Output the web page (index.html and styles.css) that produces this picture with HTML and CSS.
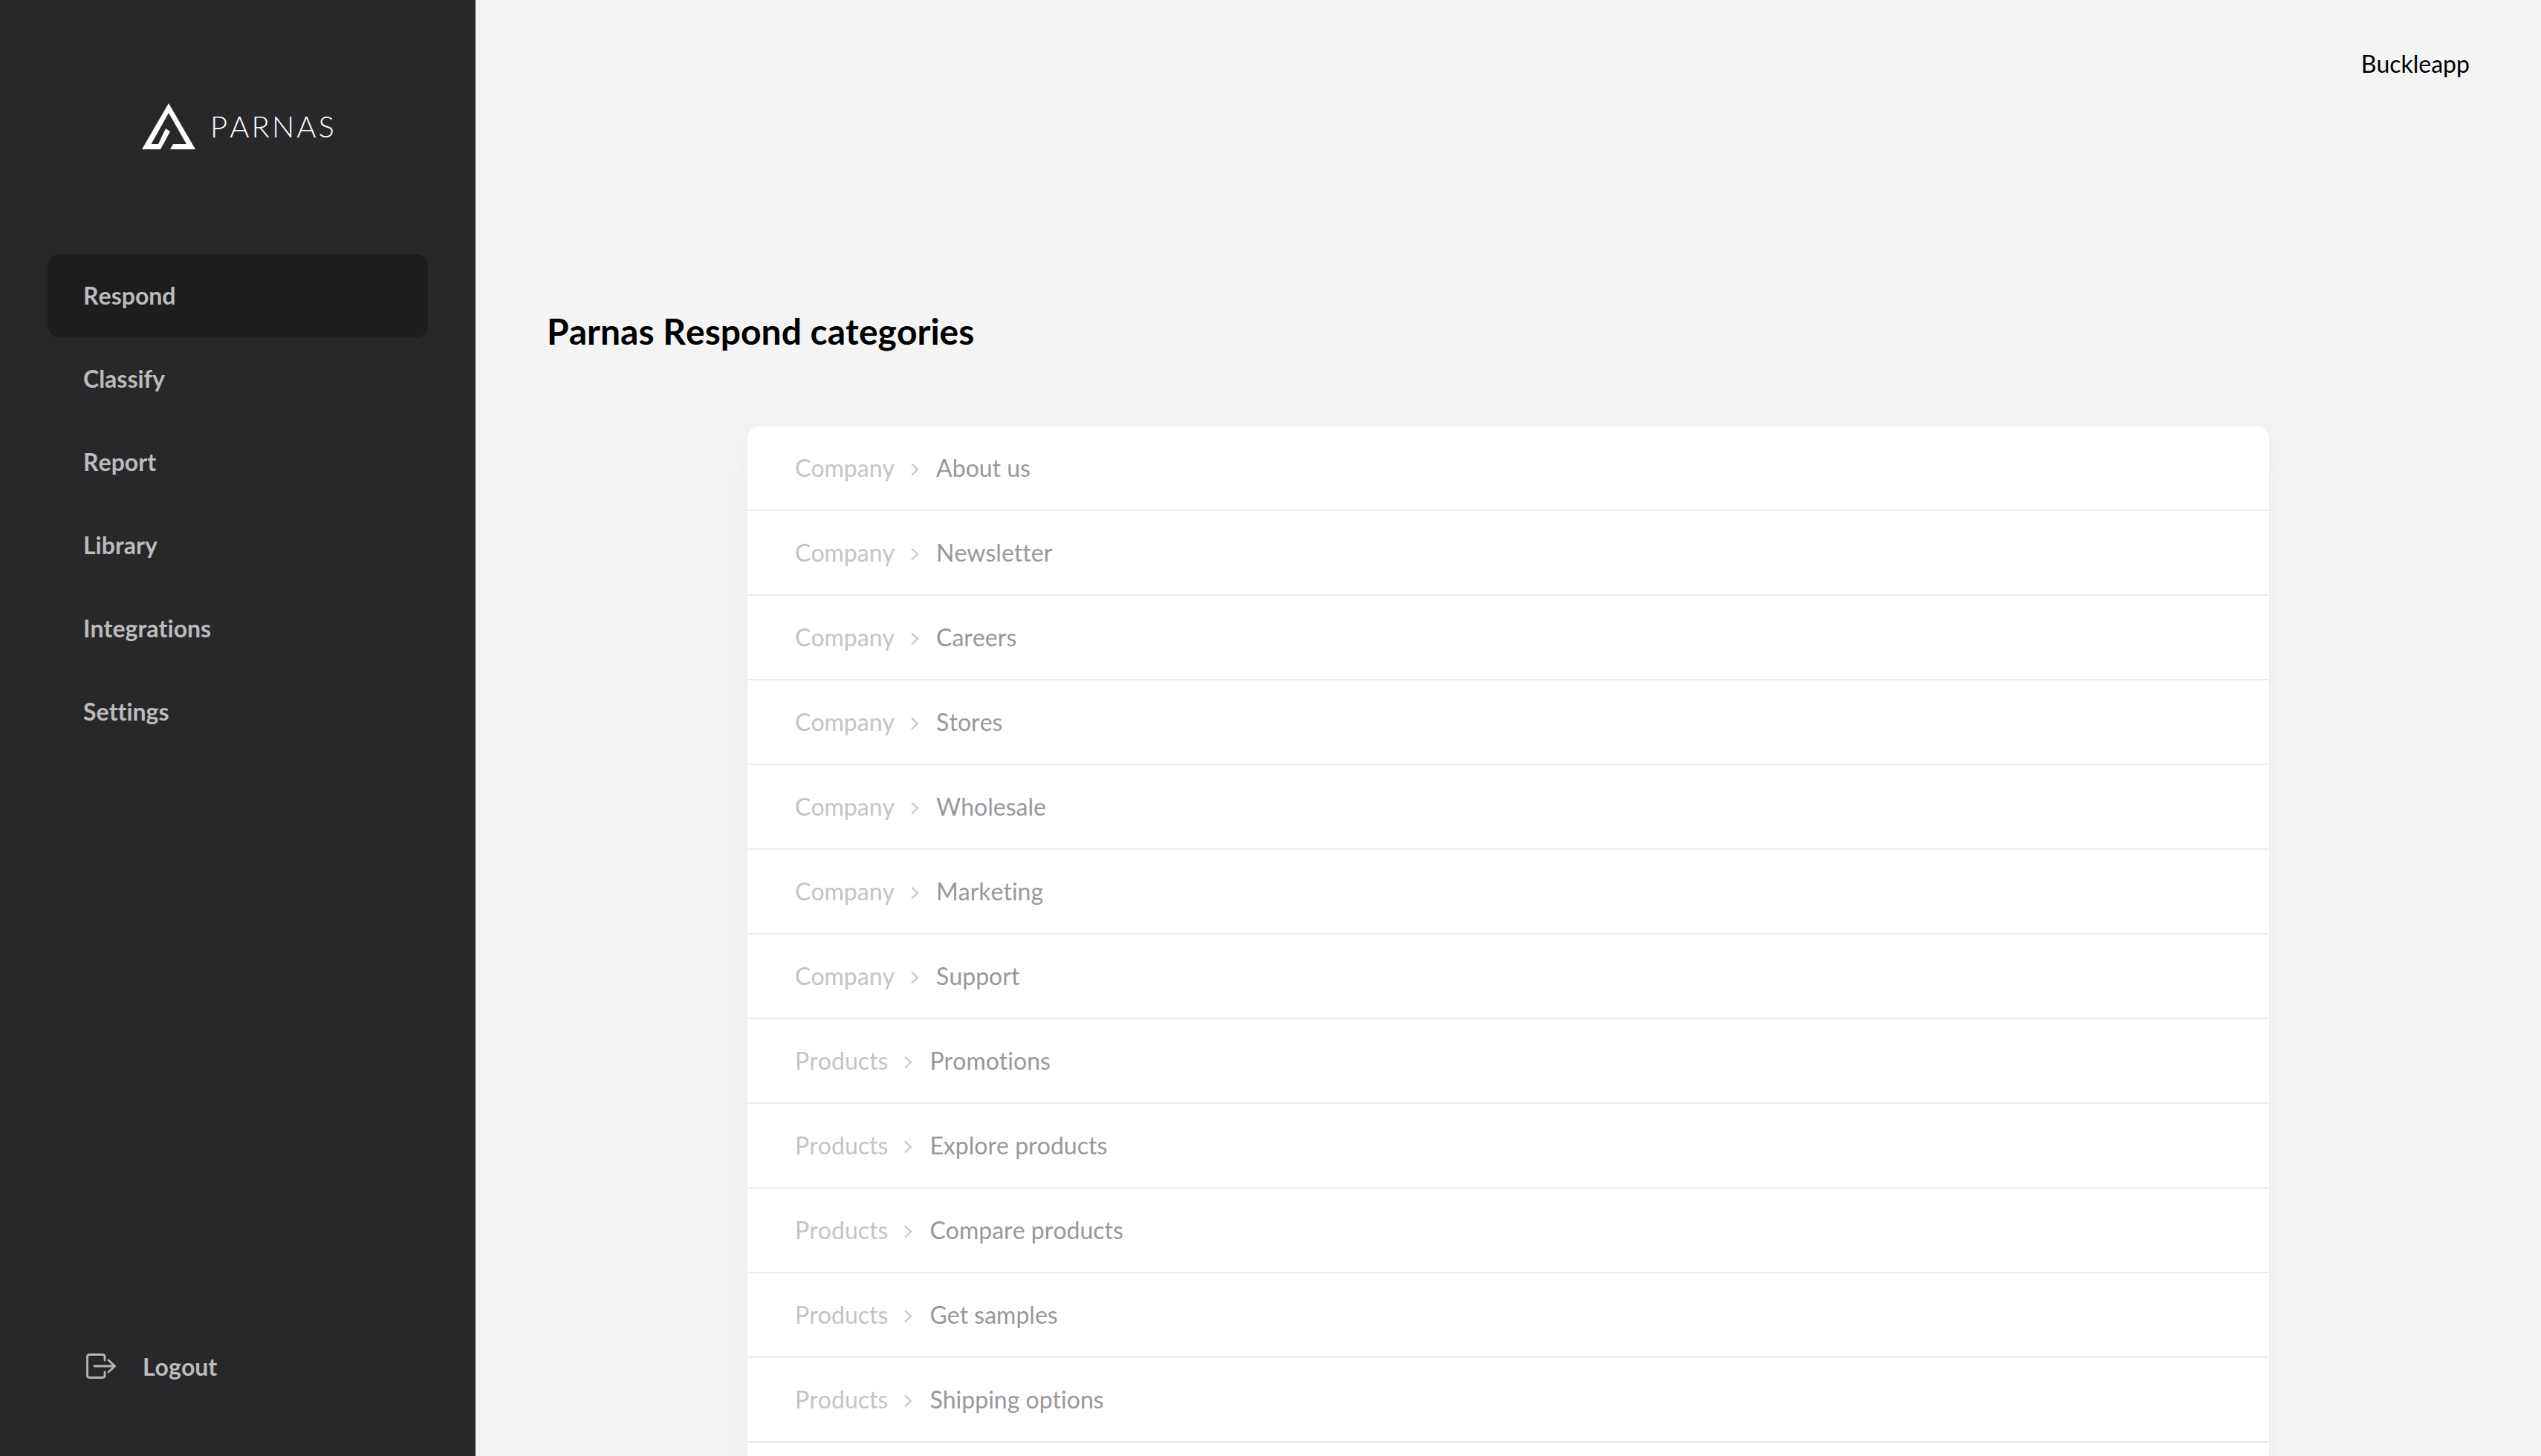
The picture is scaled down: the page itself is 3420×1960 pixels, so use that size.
FILE: index.html
```html
<html>
<head>
<title>Parnas Respond categories</title>
<link rel="stylesheet" href="styles.css">
</head>
<body>
<div id="app">

<div id="sidebar">
	<div id="logo">
		<svg class="logo-mark" width="72" height="62" viewBox="0 0 72 62">
			<path d="M36 0 L72 62 L38 62 L42 55 L60 55 L36 13 L12.5 55 L22 55 L32 34 L38 38 L25 62 L0 62 Z" fill="#ffffff"/>
		</svg>
		<span class="logo-text">PARNAS</span>
	</div>

	<div id="nav">
		<div class="nav-item active">Respond</div>
		<div class="nav-item">Classify</div>
		<div class="nav-item">Report</div>
		<div class="nav-item">Library</div>
		<div class="nav-item">Integrations</div>
		<div class="nav-item">Settings</div>
	</div>

	<div id="logout">
		<svg class="logout-icon" width="40" height="36" viewBox="0 0 40 36" fill="none" stroke="#b6b6b6" stroke-width="2.8" stroke-linecap="round" stroke-linejoin="round">
			<path d="M25 10 V5.5 Q25 2.5 22 2.5 H4.5 Q1.5 2.5 1.5 5.5 V30.5 Q1.5 33.5 4.5 33.5 H22 Q25 33.5 25 30.5 V26"/>
			<path d="M11 18 H38.5 M30 10 L38.5 18 L30 26"/>
		</svg>
		<span>Logout</span>
	</div>
</div>

<div id="main">
	<div id="topbar">Buckleapp</div>
	<h1>Parnas Respond categories</h1>

	<div id="card">
		<div class="row"><span class="parent">Company</span><svg class="sep" width="12" height="18" viewBox="0 0 12 18"><path d="M2 1.5 L10 9 L2 16.5"/></svg><span class="child">About us</span></div>
		<div class="row"><span class="parent">Company</span><svg class="sep" width="12" height="18" viewBox="0 0 12 18"><path d="M2 1.5 L10 9 L2 16.5"/></svg><span class="child">Newsletter</span></div>
		<div class="row"><span class="parent">Company</span><svg class="sep" width="12" height="18" viewBox="0 0 12 18"><path d="M2 1.5 L10 9 L2 16.5"/></svg><span class="child">Careers</span></div>
		<div class="row"><span class="parent">Company</span><svg class="sep" width="12" height="18" viewBox="0 0 12 18"><path d="M2 1.5 L10 9 L2 16.5"/></svg><span class="child">Stores</span></div>
		<div class="row"><span class="parent">Company</span><svg class="sep" width="12" height="18" viewBox="0 0 12 18"><path d="M2 1.5 L10 9 L2 16.5"/></svg><span class="child">Wholesale</span></div>
		<div class="row"><span class="parent">Company</span><svg class="sep" width="12" height="18" viewBox="0 0 12 18"><path d="M2 1.5 L10 9 L2 16.5"/></svg><span class="child">Marketing</span></div>
		<div class="row"><span class="parent">Company</span><svg class="sep" width="12" height="18" viewBox="0 0 12 18"><path d="M2 1.5 L10 9 L2 16.5"/></svg><span class="child">Support</span></div>
		<div class="row"><span class="parent">Products</span><svg class="sep" width="12" height="18" viewBox="0 0 12 18"><path d="M2 1.5 L10 9 L2 16.5"/></svg><span class="child">Promotions</span></div>
		<div class="row"><span class="parent">Products</span><svg class="sep" width="12" height="18" viewBox="0 0 12 18"><path d="M2 1.5 L10 9 L2 16.5"/></svg><span class="child">Explore products</span></div>
		<div class="row"><span class="parent">Products</span><svg class="sep" width="12" height="18" viewBox="0 0 12 18"><path d="M2 1.5 L10 9 L2 16.5"/></svg><span class="child">Compare products</span></div>
		<div class="row"><span class="parent">Products</span><svg class="sep" width="12" height="18" viewBox="0 0 12 18"><path d="M2 1.5 L10 9 L2 16.5"/></svg><span class="child">Get samples</span></div>
		<div class="row"><span class="parent">Products</span><svg class="sep" width="12" height="18" viewBox="0 0 12 18"><path d="M2 1.5 L10 9 L2 16.5"/></svg><span class="child">Shipping options</span></div>
		<div class="row"></div>
	</div>
</div>

</div>
</body>
</html>
```

FILE: styles.css
```css
* {
	font-family: "Lato", sans-serif;
	font-variant-ligatures: none;
	font-kerning: none;
	box-sizing: border-box;
}

html, body {
	margin: 0;
	padding: 0;
	height: 100%;
	overflow: hidden;
}

#app {
	display: flex;
	height: 100%;
	background-color: #f4f4f4;
}

#sidebar {
	width: 640px;
	flex-shrink: 0;
	display: flex;
	flex-direction: column;
	background-color: #28282a;
	padding: 0 64px;
}

#logo {
	display: flex;
	align-items: center;
	justify-content: center;
	gap: 20px;
	height: 342px;
	padding-bottom: 2px;
	padding-left: 1px;
}

.logo-text {
	color: #ffffff;
	font-size: 40px;
	font-weight: 300;
	letter-spacing: 3.1px;
	margin-right: -3.1px;
}

#nav {
	display: flex;
	flex-direction: column;
}

.nav-item {
	height: 112px;
	display: flex;
	align-items: center;
	padding-left: 48px;
	padding-bottom: 2px;
	border-radius: 16px;
	color: #bcbcbc;
	font-size: 32px;
	font-weight: 700;
}

.nav-item.active {
	background-color: #1d1d1f;
}

#logout {
	margin-top: auto;
	margin-bottom: 97px;
	padding-left: 52px;
	display: flex;
	align-items: center;
	gap: 36px;
	height: 48px;
	color: #bcbcbc;
	font-size: 32px;
	font-weight: 700;
}

#main {
	flex: 1;
	min-width: 0;
	padding: 0 96px;
}

#topbar {
	display: flex;
	justify-content: flex-end;
	height: 347px;
	padding-top: 66px;
	color: #000000;
	font-size: 32px;
}

h1 {
	margin: 0;
	height: 227px;
	padding-top: 70px;
	color: #000000;
	font-size: 48px;
	font-weight: 700;
}

#card {
	margin-left: 270px;
	width: 2048px;
	background-color: #ffffff;
	border-radius: 16px;
	box-shadow: 0 16px 40px rgba(220, 220, 226, 0.4);
}

.row {
	height: 114px;
	display: flex;
	align-items: center;
	padding-left: 64px;
	padding-bottom: 1px;
	border-bottom: 2px solid #ececee;
	font-size: 32px;
}

.parent {
	color: #c4c4c6;
}

.sep {
	margin: 4px 23px 0 21px;
	fill: none;
	stroke: #c4c4c6;
	stroke-width: 2;
}

.child {
	color: #98989a;
}
```
